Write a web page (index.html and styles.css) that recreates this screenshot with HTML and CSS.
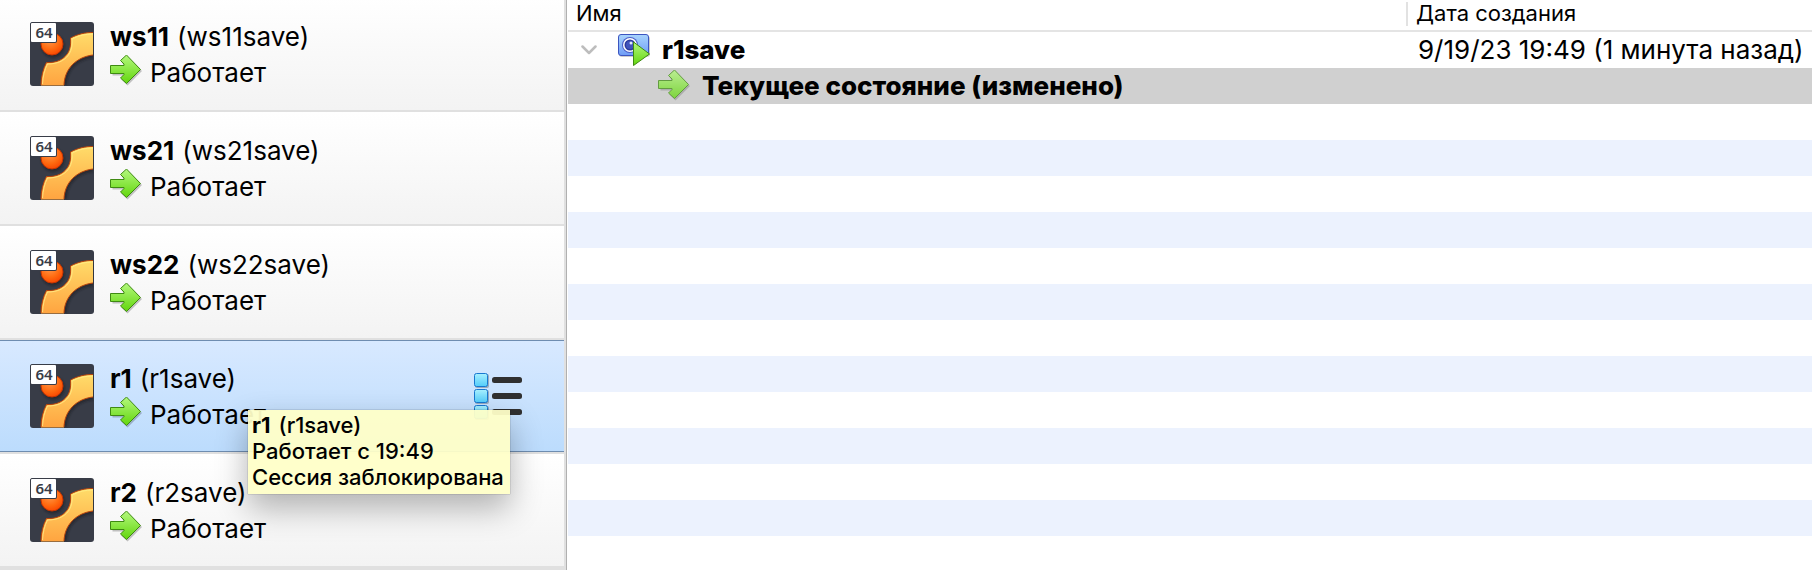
FILE: index.html
```html
<!DOCTYPE html>
<html lang="ru">
<head>
<meta charset="utf-8">
<meta name="viewport" content="width=device-width, initial-scale=1">
<title>Снимки</title>
<link rel="stylesheet" href="styles.css">
</head>
<body>
<svg class="defs" aria-hidden="true">
  <defs>
    <linearGradient id="arrowFill" x1="0" y1="0" x2="0" y2="1"><stop offset="0" stop-color="#b4f87e"/><stop offset="1" stop-color="#62d60c"/></linearGradient>
    <linearGradient id="ringFill" x1="0" y1="0" x2="0" y2="1"><stop offset="0" stop-color="#ffdc6a"/><stop offset="1" stop-color="#ffa440"/></linearGradient>
    <radialGradient id="ballFill" cx=".4" cy=".3" r=".75"><stop offset="0" stop-color="#ff9a4c"/><stop offset=".6" stop-color="#ff6a10"/><stop offset="1" stop-color="#f84400"/></radialGradient>
    <linearGradient id="cellFill" x1="0" y1="0" x2="0" y2="1"><stop offset="0" stop-color="#a8f0ff"/><stop offset="1" stop-color="#52ccfa"/></linearGradient>
    <linearGradient id="cameraFill" x1="0" y1="0" x2="0" y2="1"><stop offset="0" stop-color="#a8d4fc"/><stop offset="1" stop-color="#6f9cf6"/></linearGradient>
    <filter id="soft" x="-20%" y="-20%" width="140%" height="140%"><feGaussianBlur stdDeviation="1"/></filter>
  </defs>
  <symbol id="arrow" viewBox="0 1 32 32">
    <path d="M1.5 12.5H13.5V10.5L10.5 7.5L16.5 1.5L31 16L16.5 30.5L10.5 24.5L13.5 21.5V20.5H1.5Z" transform="translate(1 1)" fill="#000" opacity=".22"/>
    <path d="M.5 11.500H14V10L10.500 6.500L16.500 1L30.500 15.500L16.500 29.500L10.500 24L14 20.500V19.500H.5Z" fill="url(#arrowFill)" stroke="#3f8a12"/>
  </symbol>
  <symbol id="os" viewBox="0 0 64 64">
    <rect width="64" height="64" rx="3" fill="#383c47"/>
    <path d="M13 63C13 56 15 49 18 43C28 43 36 39 40 33C43 28 43 23 43 18C50 14 56 13 63 13V36C47 38 37 48 37 63Z" fill="#15171d" opacity=".5" filter="url(#soft)"/>
    <path d="M11 63.500C11 55 13 47 16.500 40.500C26 41 33 38 37.500 31.500C40.500 27 41 21 40.500 16C48 12 55 10.500 63 10.500V33C46 35 34.500 47 34 63.500Z" fill="url(#ringFill)"/>
    <path d="M11 63C11 55 13 47 16.500 40.500C26 41 33 38 37.500 31.500C40.500 27 41 21 40.500 16C48 12 55 10.500 63 10.500M63 33C46 35 34.500 47 34 63" fill="none" stroke="#b8420a"/>
    <path d="M12.500 62C13 54 14.500 48 17.500 42C27 42 34 39 38.500 33C42 28 42.500 22 42 17C49 13.500 55 12 63 12" fill="none" stroke="#fff08a" opacity=".8"/>
    <circle cx="23" cy="24" r="11.500" fill="#15171d" opacity=".5" filter="url(#soft)"/>
    <circle cx="22" cy="22" r="11" fill="url(#ballFill)" stroke="#c83400"/>
    <path d="M0 3Q0 0 3 0H27V19Q27 21 25 21H0Z" fill="#383c47"/>
    <rect x="1" y="1" width="25" height="19" rx="1" fill="#fff"/>
    <text x="14" y="16" class="os-bits">64</text>
  </symbol>
</svg>

<main class="manager">
  <nav class="sidebar" aria-label="Машины">
    <ul class="machines">
      <li class="machine">
        <svg class="os" aria-hidden="true"><use href="#os"/></svg>
        <div class="info">
          <div class="title"><strong>ws11</strong><span>(ws11save)</span></div>
          <div class="status"><svg class="arrow" aria-hidden="true"><use href="#arrow"/></svg><span>Работает</span></div>
        </div>
      </li>
      <li class="machine">
        <svg class="os" aria-hidden="true"><use href="#os"/></svg>
        <div class="info">
          <div class="title"><strong>ws21</strong><span>(ws21save)</span></div>
          <div class="status"><svg class="arrow" aria-hidden="true"><use href="#arrow"/></svg><span>Работает</span></div>
        </div>
      </li>
      <li class="machine">
        <svg class="os" aria-hidden="true"><use href="#os"/></svg>
        <div class="info">
          <div class="title"><strong>ws22</strong><span>(ws22save)</span></div>
          <div class="status"><svg class="arrow" aria-hidden="true"><use href="#arrow"/></svg><span>Работает</span></div>
        </div>
      </li>
      <li class="machine selected" aria-current="true">
        <svg class="os" aria-hidden="true"><use href="#os"/></svg>
        <div class="info">
          <div class="title"><strong>r1</strong><span>(r1save)</span></div>
          <div class="status"><svg class="arrow" aria-hidden="true"><use href="#arrow"/></svg><span>Работает</span></div>
        </div>
        <button class="tools" type="button" aria-label="Инструменты машины">
          <svg viewBox="0 0 48 48" aria-hidden="true">
            <g fill="#000" opacity=".25"><rect x="1" y="2" width="14" height="14" rx="2"/><rect x="1" y="18" width="14" height="14" rx="2"/><rect x="1" y="34" width="14" height="14" rx="2"/></g>
            <g fill="url(#cellFill)" stroke="#1878d0"><rect x=".5" y="1.500" width="13" height="13" rx="2"/><rect x=".5" y="17.500" width="13" height="13" rx="2"/><rect x=".5" y="33.500" width="13" height="13" rx="2"/></g>
            <g fill="#303030"><rect x="18" y="5" width="30" height="6" rx="2.500"/><rect x="18" y="21" width="30" height="6" rx="2.500"/><rect x="18" y="37" width="30" height="6" rx="2.500"/></g>
          </svg>
        </button>
        <div class="tooltip" role="tooltip">
          <div class="tooltip-title"><strong>r1</strong><span>(r1save)</span></div>
          <div>Работает с 19:49</div>
          <div>Сессия заблокирована</div>
        </div>
      </li>
      <li class="machine">
        <svg class="os" aria-hidden="true"><use href="#os"/></svg>
        <div class="info">
          <div class="title"><strong>r2</strong><span>(r2save)</span></div>
          <div class="status"><svg class="arrow" aria-hidden="true"><use href="#arrow"/></svg><span>Работает</span></div>
        </div>
      </li>
    </ul>
  </nav>

  <section class="snapshots" aria-label="Снимки">
    <table class="tree">
      <colgroup><col><col class="date-col"></colgroup>
      <thead>
        <tr><th scope="col">Имя</th><th scope="col" class="date-head">Дата создания</th></tr>
      </thead>
      <tbody>
        <tr>
          <td>
            <div class="node">
              <button class="toggle" type="button" aria-label="Свернуть" aria-expanded="true">
                <svg viewBox="0 0 16 10" aria-hidden="true"><path d="M1.500 1.500L8 8L14.500 1.500" fill="none" stroke="#bdbdbd" stroke-width="2.500" stroke-linecap="round" stroke-linejoin="round"/></svg>
              </button>
              <svg class="icon" viewBox="0 0 32 32" aria-hidden="true">
                <rect x="1" y="2" width="31" height="21" rx="3" fill="#000" opacity=".2"/>
                <rect x=".5" y=".5" width="30" height="21" rx="2.500" fill="url(#cameraFill)" stroke="#3c55c0"/>
                <circle cx="12" cy="11" r="8" fill="#4a5ec8"/><circle cx="12" cy="11" r="7" fill="#fff"/>
                <circle cx="12" cy="11" r="5.500" fill="#2c3a9c"/><circle cx="12" cy="11" r="4" fill="#4054bc"/><circle cx="13" cy="9" r="1.500" fill="#dfe8ff"/>
                <path d="M15.500 8V31.500L31.500 20Z" fill="url(#arrowFill)" stroke="#3f8a12" stroke-linejoin="round"/>
              </svg>
              <strong>r1save</strong>
            </div>
          </td>
          <td class="date">9/19/23 19:49 (1 минута назад)</td>
        </tr>
        <tr class="current">
          <td>
            <div class="node child">
              <svg class="icon faded" aria-hidden="true"><use href="#arrow"/></svg>
              <strong>Текущее состояние (изменено)</strong>
            </div>
          </td>
          <td></td>
        </tr>
      </tbody>
    </table>
    <div class="stripes"></div>
  </section>
</main>
</body>
</html>
```
FILE: styles.css
```css
* { box-sizing: border-box; }

body {
  margin: 0;
  font-family: Inter, "Open Sans", sans-serif;
  font-size: 26px;
  line-height: 36px;
  color: #000;
  background: #fff;
}

button {
  display: flex;
  padding: 0;
  border: 0;
  background: none;
}

.defs { position: absolute; width: 0; height: 0; }

.manager {
  display: grid;
  grid-template-columns: 567px minmax(0, 1fr);
  gap: 1px;
  height: 100vh;
  overflow: hidden;
}

/* Machine list */
.sidebar {
  overflow: hidden;
  padding-right: 2px;
  background: #e0e0e0;
  border-right: 1px solid #b0b0b0;
}

.machines {
  margin: -2px 0 0;
  padding: 0;
  list-style: none;
}

.machine {
  position: relative;
  display: flex;
  align-items: center;
  gap: 16px;
  height: 112px;
  margin-bottom: 2px;
  padding: 0 42px 0 30px;
  background: linear-gradient(#fff, #f3f3f3);
}

.machine.selected {
  z-index: 1;
  background: linear-gradient(#d8e9ff, #bcdcfd);
  border-top: 1px solid #6f8db0;
  border-bottom: 1px solid #6f8db0;
}

.os { flex: none; width: 64px; height: 64px; }

.os-bits {
  font: 600 15px "Noto Sans", sans-serif;
  fill: #383c47;
  text-anchor: middle;
}

.info { flex: 1; min-width: 0; padding-top: 2px; }

.title { display: flex; gap: 8px; }

.status { display: flex; gap: 8px; }

.arrow { flex: none; width: 32px; height: 32px; }

.tools { flex: none; }

.tools svg { width: 48px; height: 48px; }

.tooltip {
  position: absolute;
  top: 69px;
  left: 248px;
  padding: 2px 6px 4px 4px;
  font-size: 22px;
  font-weight: 500;
  line-height: 26px;
  white-space: nowrap;
  background: rgba(255, 255, 200, .94);
  box-shadow: 0 0 1px rgba(0, 0, 0, .5), 0 14px 32px rgba(0, 0, 0, .3);
}

.tooltip-title { display: flex; gap: 8px; }

/* Snapshot tree */
.snapshots { display: flex; flex-direction: column; min-width: 0; }

.tree {
  width: 100%;
  table-layout: fixed;
  border-collapse: separate;
  border-spacing: 0;
}

.date-col { width: 406px; }

.tree th {
  height: 32px;
  padding: 0 8px;
  font-size: 22px;
  font-weight: 400;
  line-height: 26px;
  text-align: left;
  vertical-align: top;
  border-bottom: 2px solid #e4e4e4;
}

.tree .date-head {
  background: linear-gradient(#e2e2e2, #e2e2e2) 0 2px / 2px 24px no-repeat;
  padding-left: 10px;
}

.tree td { height: 36px; padding: 0; white-space: nowrap; }

.tree .date { padding-left: 12px; }

.tree strong { font-weight: 800; }

.current { background: #d0d0d0; }

.node { display: flex; align-items: center; padding-left: 13px; }

.node.child { padding-left: 90px; }

.toggle { margin-right: 21px; }

.toggle svg { width: 16px; height: 10px; }

.icon { flex: none; width: 32px; height: 32px; margin-right: 12px; }

.faded { opacity: .75; }

.stripes {
  flex: 1;
  background: repeating-linear-gradient(#fff 0 36px, #ecf2fe 36px 72px);
}
```
